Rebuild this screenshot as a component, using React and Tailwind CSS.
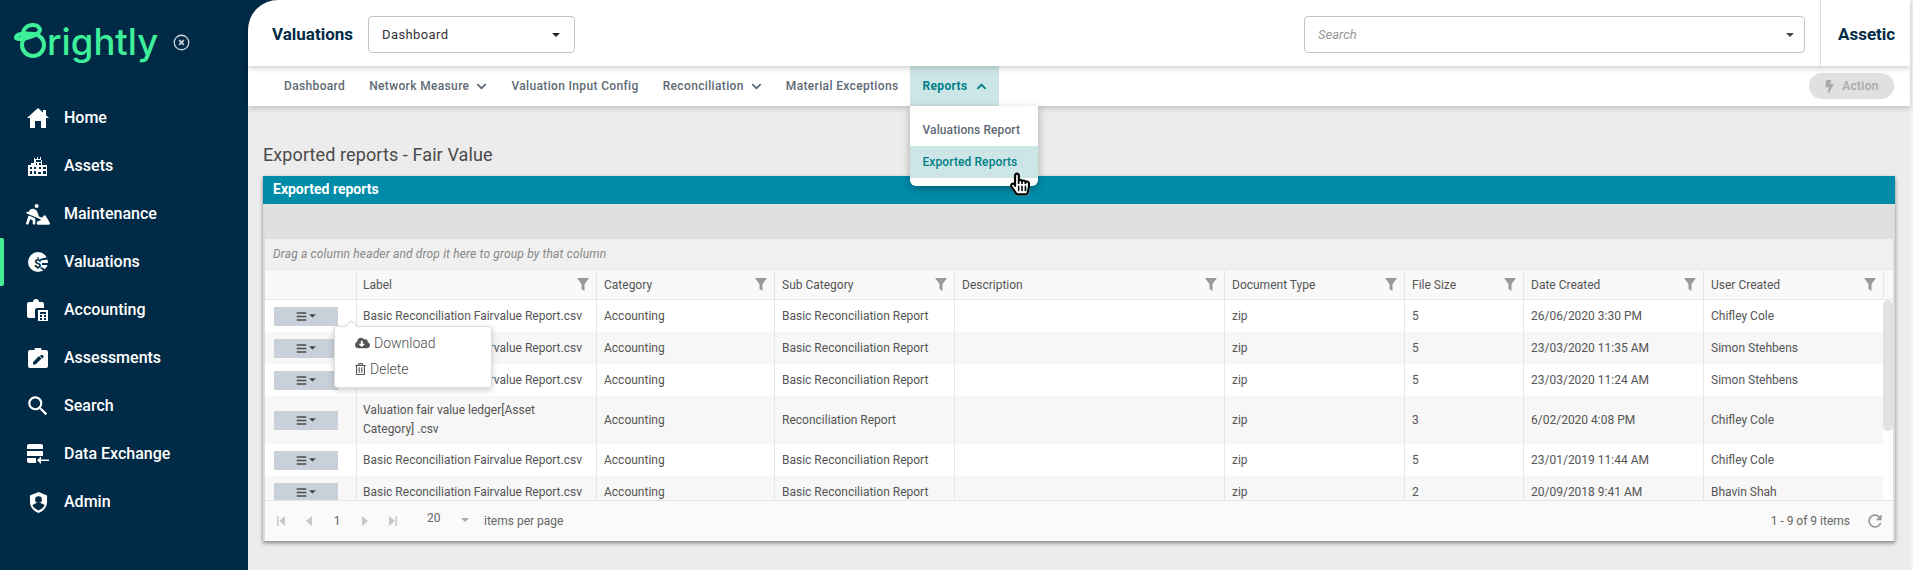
import React from 'react';
import { MdSearch, MdRefresh } from 'react-icons/md';
import { FaPersonDigging } from 'react-icons/fa6';
import {
  FaBolt,
  FaCloudDownloadAlt,
  FaRegTrashAlt,
  FaHandPointer,
  FaRegHandPointer,
  FaBars,
  FaChevronDown,
  FaChevronUp,
} from 'react-icons/fa';

function HomeIcon() {
  return (
    <svg viewBox="0 0 22 20" className="w-[22px] h-[20px]" fill="currentColor">
      <path d="M11 0l5 4.500V2h3v5.200L22 10h-3v10h-5v-7H8v7H3V10H0z" />
    </svg>
  );
}

function AssetsIcon() {
  return (
    <svg viewBox="0 0 20 20" className="w-[20px] h-[20px]" fill="currentColor">
      <path
        fillRule="evenodd"
        d="M6 7V2h1v1h2V1h1v2h2V1h1v3h1v5h5v11H0V9h3V7h3zm2 0v2h1V7H8zm3 0v2h2V7h-2zM8 4v2h5V4H8zM2 11v2h2v-2H2zm4 0v2h2v-2H6zm5 0v2h2v-2h-2zm4 0v2h3v-2h-3zM2 15v3h2v-3H2zm4 0v3h2v-3H6zm4 1v2h3v-2h-3zm5-1v3h3v-3h-3z"
      />
    </svg>
  );
}

function ValuationsIcon() {
  return (
    <svg viewBox="0 0 20 20" className="w-[20px] h-[20px]">
      <circle cx="10" cy="10" r="10" fill="currentColor" />
      <path d="M12 7l8-2v2.500l-8 1zM14 11h6v2h-6zM13 15l4 2-1 2-4-3z" fill="#002a45" />
      <text x="6" y="16" fontSize="13" fontWeight="700" fill="#002a45" fontFamily="Roboto, sans-serif">$</text>
    </svg>
  );
}

function AccountingIcon() {
  return (
    <svg viewBox="0 0 22 22" className="w-[22px] h-[22px]" fill="currentColor">
      <path d="M2 3h4a3 3 0 0 1 6 0h3a2 2 0 0 1 2 2v4h-7a2 2 0 0 0-2 2v8H2a2 2 0 0 1-2-2V5a2 2 0 0 1 2-2z" />
      <path
        fillRule="evenodd"
        d="M11 11h10v11H11V11zm2 2v2h6v-2h-6zm0 3v2h2v-2h-2zm4 0v2h2v-2h-2zm-4 3v2h2v-2h-2zm4 0v2h2v-2h-2z"
      />
    </svg>
  );
}

function AssessmentsIcon() {
  return (
    <svg viewBox="0 0 20 20" className="w-[20px] h-[20px]" fill="currentColor">
      <path
        fillRule="evenodd"
        d="M2 2h4.500a3.500 3.500 0 0 1 7 0H18a2 2 0 0 1 2 2v14a2 2 0 0 1-2 2H2a2 2 0 0 1-2-2V4a2 2 0 0 1 2-2zm3 12v2.500h2.500l6-6L11 8l-6 6zm9.500-7-1.500 0-1 1 2.500 2.500 1-1v-1.500L14.500 7z"
      />
    </svg>
  );
}

function DataExchangeIcon() {
  return (
    <svg viewBox="0 0 22 22" className="w-[22px] h-[22px]" fill="currentColor">
      <path d="M2 1h12a2 2 0 0 1 2 2v3H0V3a2 2 0 0 1 2-2zM0 8h16v5H0zM0 15h9v5H2a2 2 0 0 1-2-2v-3z" />
      <path d="M22 16.500v1.500h-8v3l-4-3.700 4-3.800v3z" />
    </svg>
  );
}

function AdminIcon() {
  return (
    <svg viewBox="0 0 20 22" className="w-[19px] h-[21px]">
      <path d="M10 0l9 3.500v7c0 5.500-3.800 9.500-9 11.500-5.200-2-9-6-9-11.500v-7z" fill="currentColor" />
      <circle cx="10" cy="8" r="3.500" fill="#002a45" />
      <path d="M3.500 14c2-2 4-2.500 6.500-2.500s4.500.5 6.500 2.500c-1.500 2.500-3.500 4-6.500 5.500-3-1.500-5-3-6.500-5.500z" fill="#002a45" />
    </svg>
  );
}

function FilterIcon() {
  return (
    <svg viewBox="0 0 12 13" className="w-[12px] h-[13px] shrink-0" fill="#999999">
      <path d="M0 0h12L7.500 6v7l-3-2V6z" />
    </svg>
  );
}

function Caret({ className }) {
  return (
    <svg viewBox="0 0 10 5" className={className} fill="currentColor">
      <path d="M0 0h10L5 5z" />
    </svg>
  );
}

function PagerArrow({ dir, bar }) {
  return (
    <span className="w-[28px] flex justify-center text-[#c8c8c8]">
      <svg viewBox="0 0 8 10" className="w-[8px] h-[10px]" fill="currentColor">
        {dir === 'left' ? <path d={bar ? 'M0 0h1.500v10H0zM8 0v10L2 5z' : 'M7 0v10L1 5z'} /> : <path d={bar ? 'M8 0H6.500v10H8zM0 0v10l6-5z' : 'M1 0v10l6-5z'} />}
      </svg>
    </span>
  );
}

const navItems = [
  { label: 'Home', icon: <HomeIcon /> },
  { label: 'Assets', icon: <AssetsIcon /> },
  { label: 'Maintenance', icon: <FaPersonDigging className="w-[24px] h-[24px]" /> },
  { label: 'Valuations', icon: <ValuationsIcon />, active: true },
  { label: 'Accounting', icon: <AccountingIcon /> },
  { label: 'Assessments', icon: <AssessmentsIcon /> },
  { label: 'Search', icon: <MdSearch className="w-[26px] h-[26px]" /> },
  { label: 'Data Exchange', icon: <DataExchangeIcon /> },
  { label: 'Admin', icon: <AdminIcon /> },
];

const colClasses = ['w-[91px]', 'w-[240px]', 'w-[178px]', 'w-[180px]', 'w-[270px]', 'w-[180px]', 'w-[119px]', 'w-[180px]', 'w-[180px]'];
const headers = ['', 'Label', 'Category', 'Sub Category', 'Description', 'Document Type', 'File Size', 'Date Created', 'User Created'];

const basic = 'Basic Reconciliation Fairvalue Report.csv';
const rows = [
  [basic, 'Accounting', 'Basic Reconciliation Report', '', 'zip', '5', '26/06/2020 3:30 PM', 'Chifley Cole'],
  [basic, 'Accounting', 'Basic Reconciliation Report', '', 'zip', '5', '23/03/2020 11:35 AM', 'Simon Stehbens'],
  [basic, 'Accounting', 'Basic Reconciliation Report', '', 'zip', '5', '23/03/2020 11:24 AM', 'Simon Stehbens'],
  ['Valuation fair value ledger[Asset Category] .csv', 'Accounting', 'Reconciliation Report', '', 'zip', '3', '6/02/2020 4:08 PM', 'Chifley Cole'],
  [basic, 'Accounting', 'Basic Reconciliation Report', '', 'zip', '5', '23/01/2019 11:44 AM', 'Chifley Cole'],
  [basic, 'Accounting', 'Basic Reconciliation Report', '', 'zip', '2', '20/09/2018 9:41 AM', 'Bhavin Shah'],
];

function Cols() {
  return (
    <colgroup>
      {colClasses.map((c, i) => (
        <col key={i} className={c} />
      ))}
    </colgroup>
  );
}

function Sidebar() {
  return (
    <div className="w-[248px] shrink-0 bg-[#002a45] text-white flex flex-col">
      <div className="h-[94px] flex items-start pl-[12px] pt-[20px]">
        <svg viewBox="12 20 36 42" className="w-[36px] h-[42px] text-[#3ff09a] shrink-0" fill="none" stroke="currentColor" strokeWidth="4">
          <circle cx="33" cy="45" r="11" />
          <path d="M23 41C21 30 26 25 33 25c6 0 9 5 5 8-6 5-22 8-22 4.500C16 34 24 33 33 34" />
        </svg>
        <span className="text-[36.500px] leading-[42px] font-medium text-[#3ff09a] font-['Inter',sans-serif] -ml-[1px] mt-[1px]">rightly</span>
        <svg viewBox="0 0 18 18" className="w-[17px] h-[17px] ml-[15px] mt-[14px] text-[#cfd6dc]" fill="none" stroke="currentColor">
          <circle cx="9" cy="9" r="7.700" strokeWidth="1.400" />
          <path d="M6.500 6.500l5 5M11.500 6.500l-5 5" strokeWidth="1.800" />
        </svg>
      </div>
      {navItems.map((item) => (
        <div key={item.label} className="h-[48px] flex items-center relative">
          {item.active && <span className="absolute left-0 top-0 bottom-0 w-[4px] rounded-r-[2px] bg-[#44ee95]" />}
          <span className="w-[72px] pl-[24px] pr-[20px] flex justify-center shrink-0 -mr-[8px]">{item.icon}</span>
          <span className="text-[16px] leading-[20px] font-medium">{item.label}</span>
        </div>
      ))}
    </div>
  );
}

function TopBar() {
  return (
    <div className="h-[66px] bg-white rounded-tl-[30px] flex items-center pl-[24px] pt-[3px] shadow-[0_2px_6px_rgba(0,0,0,0.2)] relative z-20">
      <span className="text-[17px] font-bold text-[#002a45] w-[96px]">Valuations</span>
      <div className="w-[207px] h-[37px] border border-[#c4c4c4] rounded-[4px] flex items-center justify-between pl-[13px] pr-[14px] text-[13px] text-[#333] tracking-[0.4px]">
        Dashboard
        <Caret className="w-[8px] h-[4px] text-[#222]" />
      </div>
      <div className="ml-auto w-[501px] h-[37px] border border-[#c4c4c4] rounded-[4px] flex items-center justify-between pl-[13px] pr-[10px] text-[13px] italic text-[#999]">
        Search
        <Caret className="w-[8px] h-[4px] text-[#444] not-italic" />
      </div>
      <div className="ml-[15px] w-[90px] h-[69px] -mt-[3px] border-l border-[#dcdcdc] flex items-center pl-[17px] pt-[3px] text-[17px] font-bold text-[#002a45]">Assetic</div>
    </div>
  );
}

function SubNav() {
  const link = 'px-3 h-full flex items-center gap-[7px] text-[12px] font-medium text-[#5e6a75] tracking-[0.35px]';
  return (
    <div className="h-[40px] bg-white flex items-center pl-[24px] pr-[16px] shadow-[0_2px_6px_rgba(0,0,0,0.2)] relative z-10">
      <div className={link}>Dashboard</div>
      <div className={link}>
        Network Measure <FaChevronDown className="w-[11px] h-[11px]" />
      </div>
      <div className={link}>Valuation Input Config</div>
      <div className={link}>
        Reconciliation <FaChevronDown className="w-[11px] h-[11px]" />
      </div>
      <div className={link}>Material Exceptions</div>
      <div className="relative h-full">
        <div className="px-3 h-full flex items-center gap-[8px] text-[12px] font-bold text-[#007f86] bg-[#cce5e6] tracking-[0.35px]">
          Reports <FaChevronUp className="w-[11px] h-[11px]" />
        </div>
        <div className="absolute left-0 top-full w-[128px] pb-[8px] bg-white rounded-b-[6px] shadow-[0_3px_8px_rgba(0,0,0,0.3)] text-[12px] font-medium tracking-[0.1px]">
          <div className="h-[40px] pt-[7px] flex items-center pl-[12px] text-[#5e6a75]">Valuations Report</div>
          <div className="h-[32px] flex items-center pl-[12px] bg-[#cce5e6] text-[#007f86]">Exported Reports</div>
        </div>
        <div className="absolute left-[100px] top-[106px] w-[20px] h-[24px] z-40">
          <FaHandPointer className="absolute inset-0 w-[20px] h-[24px] text-white" />
          <FaRegHandPointer className="absolute inset-0 w-[20px] h-[24px] text-black" />
        </div>
      </div>
      <div className="ml-auto h-[26px] w-[85px] rounded-full bg-[#e0e0e0] flex items-center justify-center gap-[7px] text-[12px] font-medium text-[#a8a8a8] tracking-[0.25px]">
        <FaBolt className="w-[11px] h-[13px]" /> Action
      </div>
    </div>
  );
}

function ActionButton() {
  return (
    <div className="w-[64px] h-[19px] bg-[#c8d1d9] flex items-center justify-center gap-[2px] text-[#4a4a4a]">
      <FaBars className="w-[11px] h-[11px]" />
      <Caret className="w-[7px] h-[4px]" />
    </div>
  );
}

function Grid() {
  return (
    <div className="bg-white border-x-2 border-[#dcdcdc] shadow-[0_2px_4px_rgba(0,0,0,0.45)]">
      <div className="h-[28px] bg-[#008ca8] -mx-[2px] flex items-center pl-[10px] pb-[1px] text-[14px] font-bold text-white">Exported reports</div>
      <div className="h-[35px] bg-[#e0e0e0]" />
      <div className="h-[30px] bg-[#f0f0f0] flex items-center pl-[8px] text-[12px] italic text-[#888] tracking-[0.16px]">Drag a column header and drop it here to group by that column</div>
      <div className="h-[31px] flex bg-[#f9f9f9] border-y border-[#e6e6e6]">
        <table className="table-fixed border-separate border-spacing-0 w-[1618px] text-[12px] text-[#555]">
          <Cols />
          <thead>
            <tr>
              {headers.map((h, i) => (
                <th key={i} className={`h-[29px] p-0 font-normal text-left ${i ? 'border-l border-[#e6e6e6]' : ''}`}>
                  {h && (
                    <div className={`flex items-center justify-between pr-[7px] ${i === 1 ? 'pl-[6px]' : 'pl-[7px]'}`}>
                      {h}
                      <FilterIcon />
                    </div>
                  )}
                </th>
              ))}
            </tr>
          </thead>
        </table>
        <div className="w-[10px] border-l border-[#e6e6e6]" />
      </div>
      <div className="h-[200px] flex overflow-hidden relative">
        <table className="table-fixed border-separate border-spacing-0 w-[1618px] h-max text-[12px] leading-[19px] text-[#555]">
          <Cols />
          <tbody>
            {rows.map((row, i) => (
              <tr key={i} className={i % 2 ? 'bg-[#f7f7f7]' : 'bg-white'}>
                <td className={`p-0 ${i === 3 ? 'h-[48px]' : 'h-[32px]'}`}>
                  <div className="pl-[9px]">
                    <ActionButton />
                  </div>
                </td>
                {row.map((cell, j) => (
                  <td key={j} className={`py-0 pr-[7px] border-l border-[#e6e6e6] ${j === 0 ? 'pl-[6px]' : 'pl-[7px]'}`}>
                    {cell}
                  </td>
                ))}
              </tr>
            ))}
          </tbody>
        </table>
        <div className="w-[10px] shrink-0 bg-white">
          <div className="h-[131px] rounded-[5px] bg-[#e2e2e2]" />
        </div>
        <div className="absolute left-[69px] top-[26px] w-[158px] h-[62px] bg-white rounded-[3px] border border-[#dedede] shadow-[0_2px_6px_rgba(0,0,0,0.2)] text-[14px] text-[#4d4d4d] pl-[20px] pt-[3px] font-light z-10">
          <span className="absolute left-[12px] -top-[5px] w-[9px] h-[9px] bg-white rotate-45 border-l border-t border-[#dedede]" />
          <div className="h-[26px] flex items-center gap-[4px]">
            <FaCloudDownloadAlt className="w-[15px] h-[14px] text-[#555]" /> Download
          </div>
          <div className="h-[26px] flex items-center gap-[4px]">
            <FaRegTrashAlt className="w-[11px] h-[12px] text-[#555]" /> Delete
          </div>
        </div>
      </div>
      <div className="h-[41px] bg-[#fafafa] border-t border-[#e6e6e6] flex items-center text-[12px] text-[#666] pl-[2px] pr-[8px]">
        <PagerArrow dir="left" bar />
        <PagerArrow dir="left" />
        <span className="w-[28px] text-center">1</span>
        <PagerArrow dir="right" />
        <PagerArrow dir="right" bar />
        <span className="ml-[20px] w-[34px] -mt-[6px]">20</span>
        <Caret className="w-[8px] h-[6px] text-[#aaa] -mt-[3px]" />
        <span className="ml-[15px]">items per page</span>
        <span className="ml-auto">1 - 9 of 9 items</span>
        <MdRefresh className="ml-[15px] w-[20px] h-[20px] text-[#999]" />
      </div>
    </div>
  );
}

export default function App() {
  return (
    <div className="flex h-[570px] w-full overflow-hidden bg-[#002a45] font-['Roboto',sans-serif]">
      <Sidebar />
      <div className="flex-1 flex flex-col min-w-0">
        <TopBar />
        <SubNav />
        <div className="flex-1 bg-[#ececec] px-[15px] pt-[37px]">
          <h1 className="text-[18px] leading-[24px] font-normal text-[#4a4a4a] tracking-[0.1px] mb-[9px]">Exported reports - Fair Value</h1>
          <Grid />
        </div>
      </div>
      <div className="w-[3px] bg-[#f1f1f1] shrink-0" />
    </div>
  );
}
